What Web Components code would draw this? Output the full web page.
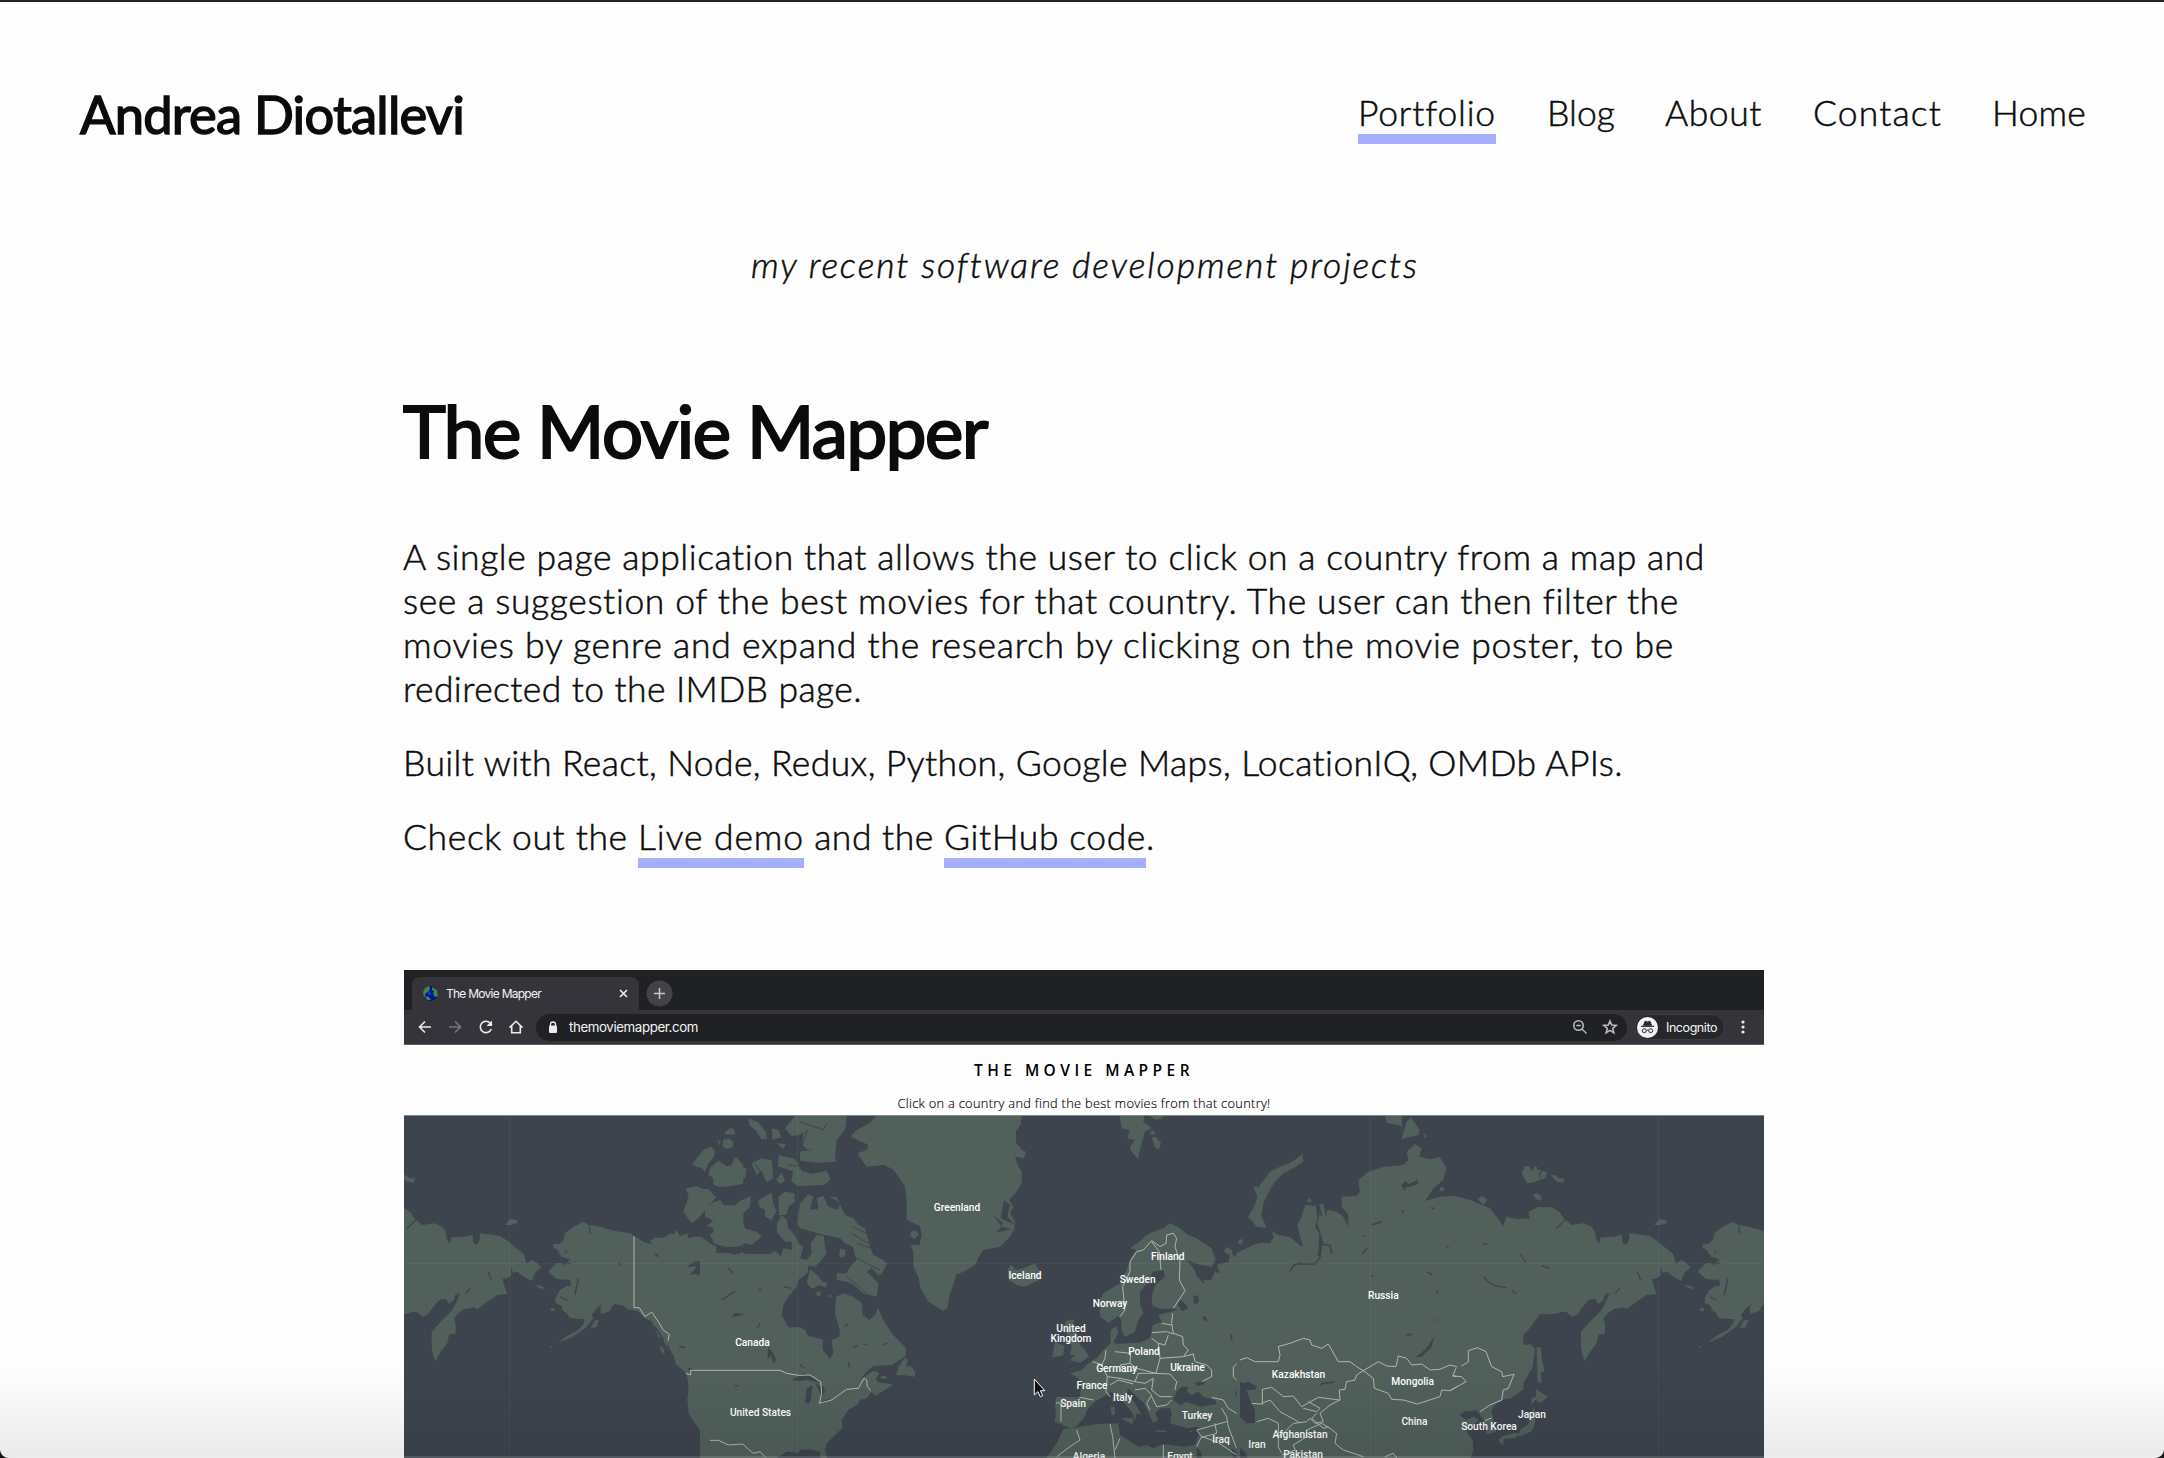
<!DOCTYPE html>
<html lang="en"><head><meta charset="utf-8"><title>Andrea Diotallevi</title>
<style>
html,body{margin:0;height:100%;overflow:hidden;background:#fefefe}
body{font-family:Lato,"Open Sans",sans-serif;color:#0b0b0b}
</style></head><body>
<portfolio-page></portfolio-page>
<script>
const define=(name,html,after)=>customElements.define(name,class extends HTMLElement{
  connectedCallback(){
    if(this.shadowRoot)return;
    const t=document.createElement('template');t.innerHTML=html;
    this.attachShadow({mode:'open'}).append(t.content.cloneNode(true));
    if(after)after(this);
  }});

/* Text run tracked so that it spans exactly its "w" attribute */
define('fit-text',`<style>:host{display:inline-block;white-space:pre;flex:none;font-variant-ligatures:none}</style><slot></slot>`,el=>{
  const n=el.textContent.length,w=+el.getAttribute('w');
  el.style.letterSpacing='0px';
  const now=el.getBoundingClientRect().width;
  el.style.letterSpacing=((w-now)/n)+'px';
  el.style.width=w+'px';
});

define('nav-link',`<style>
:host{display:block;height:44px;line-height:44px;font-size:35.500px;font-weight:300;-webkit-text-stroke:.5px #0b0b0b}
:host([active]){background:linear-gradient(#a5affb,#a5affb) 0 100%/100% 10px no-repeat;height:53px}
</style><slot></slot>`);

define('text-link',`<style>
:host{display:block;flex:none;height:53px;background:linear-gradient(#a5affb,#a5affb) 0 100%/100% 10px no-repeat}
</style><slot></slot>`);

define('site-header',`<style>
:host{display:flex;justify-content:space-between;align-items:flex-start;padding:78px 78px 0 80px;height:104px;box-sizing:content-box}
h1{margin:-2px 0 0;font-size:52.500px;line-height:72px;font-weight:400;-webkit-text-stroke:1.500px #0b0b0b}
nav{display:flex;padding-top:11px}
nav nav-link:nth-child(1){margin-right:51px}
nav nav-link:nth-child(2){margin-right:50px}
nav nav-link:nth-child(3){margin-right:51px}
nav nav-link:nth-child(4){margin-right:50px}
</style>
<h1><fit-text w="384">Andrea Diotallevi</fit-text></h1>
<nav><nav-link active><fit-text w="138">Portfolio</fit-text></nav-link><nav-link><fit-text w="68">Blog</fit-text></nav-link><nav-link><fit-text w="97">About</fit-text></nav-link><nav-link><fit-text w="129">Contact</fit-text></nav-link><nav-link><fit-text w="94">Home</fit-text></nav-link></nav>`);

define('project-text',`<style>
:host{display:block;font-size:35.500px;line-height:44px;font-weight:300;-webkit-text-stroke:.5px #0b0b0b}
h2{margin:0 0 61px;font-size:72.500px;line-height:88px;font-weight:400;-webkit-text-stroke:2.200px #0b0b0b}
p{margin:0 0 30px;display:flex;flex-direction:column;align-items:flex-start}
.row{flex-direction:row;height:44px;margin:0}
</style>
<h2><fit-text w="584">The Movie Mapper</fit-text></h2>
<p><fit-text w="1302">A single page application that allows the user to click on a country from a map and</fit-text><fit-text w="1276">see a suggestion of the best movies for that country. The user can then filter the</fit-text><fit-text w="1271">movies by genre and expand the research by clicking on the movie poster, to be</fit-text><fit-text w="459">redirected to the IMDB page.</fit-text></p>
<p><fit-text w="1220">Built with React, Node, Redux, Python, Google Maps, LocationIQ, OMDb APIs.</fit-text></p>
<p class="row"><fit-text w="235">Check out the </fit-text><text-link><fit-text w="166">Live demo</fit-text></text-link><fit-text w="140"> and the </fit-text><text-link><fit-text w="202">GitHub code</fit-text></text-link><fit-text w="9">.</fit-text></p>`);

define('browser-tabs',`<style>
:host{display:flex;height:40px;background:#202124;align-items:flex-start}
svg{display:block}
.tab{display:flex;align-items:center;box-sizing:border-box;width:227px;height:33px;margin:7px 0 0 8px;padding:0 10px 1px 10px;border-radius:8px 8px 0 0;background:#35343a;color:#f4f4f5;font:12px Inter,sans-serif}
.tab fit-text{margin:0 auto 0 7px}
.new{margin:10px 0 0 7px}
</style>
<div class="tab"><svg width="17" height="17" viewBox="0 0 17 17"><circle cx="8.500" cy="8.500" r="7.500" fill="#06158f"/><path d="M3 3l4-2 1 2-1 3-3 2-2 5-1-6zM10 2l5 3 1 6-3 1-2-3 1-3-2-1zM3 11l4 1 2 3-4 0z" fill="#3e8d3c"/><path d="M6 7l2-1 1 4-3 0z" fill="#1438d8"/></svg><fit-text w="95">The Movie Mapper</fit-text><svg width="11" height="11" viewBox="0 0 11 11" stroke="#f4f4f5" stroke-width="1.500"><path d="M2 2l7 7M9 2L2 9"/></svg></div>
<svg class="new" width="27" height="27" viewBox="0 0 27 27"><circle cx="13.500" cy="13.500" r="13" fill="#434247"/><path d="M13.500 8v11M8 13.500h11" stroke="#c8c8cb" stroke-width="1.500"/></svg>`);

define('browser-toolbar',`<style>
:host{display:flex;align-items:center;height:34px;box-sizing:content-box;background:#35343a;border-bottom:1px solid #5c5b61;color:#f4f4f5;font:13.300px Inter,sans-serif}
svg{display:block;flex:none;fill:none;stroke:#ececee;stroke-width:1.600}
.nav{display:flex;gap:14.500px;padding:0 0 0 12.500px;width:132px;box-sizing:border-box;flex:none}
.bar{display:flex;align-items:center;width:1091px;height:27px;border-radius:14px;background:#202124;box-sizing:border-box;padding:0 9px 0 12px;flex:none}
.bar fit-text{margin:0 auto 0 11px}
.bar svg:not(.lock){stroke:#b9babd}
.star{margin-left:14px}
.who{display:flex;align-items:center;width:90px;height:26px;box-sizing:border-box;border-radius:13px;margin-left:8px;background:#27262b;border:1px solid #3d3d43;gap:8px;padding-left:1px;font-size:12.500px}
.dots{margin-left:10px}
</style>
<div class="nav">
<svg width="16" height="16" viewBox="0 0 16 16"><path d="M14 8H2.500M8 2.500L2.500 8 8 13.500"/></svg>
<svg width="16" height="16" viewBox="0 0 16 16" style="stroke:#77767c"><path d="M2 8h11.500M8 2.500L13.500 8 8 13.500"/></svg>
<svg width="16" height="16" viewBox="0 0 16 16"><path d="M13.300 10A5.700 5.700 0 1 1 12.300 4.200L14 6"/><path d="M14 1.500V7H8.500z" fill="#ececee" stroke="none"/></svg>
<svg width="16" height="16" viewBox="0 0 16 16"><path d="M1.500 8.600L8 2.300l6.500 6.300M3.700 7v6.700h8.600V7"/></svg></div>
<div class="bar"><svg class="lock" width="10" height="13" viewBox="0 0 10 13"><path d="M2.500 5V3.500a2.500 2.500 0 0 1 5 0V5" stroke-width="1.300"/><rect x="1" y="4.500" width="8" height="7.500" rx="1" fill="#ececee" stroke="none"/></svg><fit-text w="129">themoviemapper.com</fit-text>
<svg width="16" height="16" viewBox="0 0 16 16"><circle cx="6.500" cy="6.500" r="4.700"/><path d="M10 10l4.500 4.500M4.300 6.500h4.400" stroke-width="1.400"/></svg>
<svg class="star" width="16" height="16" viewBox="0 0 16 16"><path d="M8 2l1.700 4.100 4.400.4-3.400 2.900 1.100 4.400L8 11.400l-3.800 2.400 1.100-4.400-3.400-2.900 4.400-.4z"/></svg></div>
<div class="who"><svg width="21" height="21" viewBox="0 0 21 21" style="stroke:#2b2b30;stroke-width:1"><circle cx="10.500" cy="10.500" r="10.500" fill="#f2f2f4" stroke="none"/><path d="M4 9.300h13" stroke-width="1.200"/><path d="M6.500 8.300l1.500-4 2.500.7 2.500-.7 1.500 4z" fill="#2b2b30"/><circle cx="7.300" cy="13.700" r="2"/><circle cx="13.700" cy="13.700" r="2"/><path d="M9.300 13.500q1.200-.8 2.400 0"/></svg><fit-text w="51">Incognito</fit-text></div>
<svg class="dots" width="16" height="16" viewBox="0 0 16 16"><g fill="#ececee" stroke="none"><circle cx="8" cy="3" r="1.600"/><circle cx="8" cy="8" r="1.600"/><circle cx="8" cy="13" r="1.600"/></g></svg>`);

define('map-title',`<style>
:host{display:flex;flex-direction:column;align-items:center;height:70px;background:#fefefe;color:#000;box-sizing:border-box;padding-top:15px}
b{font:600 15.500px/20px "Open Sans",sans-serif}
span{font:300 12.800px/16px "Open Sans",sans-serif;margin-top:15px;color:#000;-webkit-text-stroke:.15px #000}
</style><b><fit-text w="220">THE MOVIE MAPPER</fit-text></b><span><fit-text w="373">Click on a country and find the best movies from that country!</fit-text></span>`);

/* label anchor points: centre x, baseline y, name */
const labels=[[957,1210.500,'Greenland'],[752.500,1345.500,'Canada'],[760.500,1416,'United States'],[1025,1279,'Iceland'],[1167.700,1259.500,'Finland'],[1137.700,1283,'Sweden'],[1110,1307,'Norway'],[1071,1332,'United'],[1071,1342.300,'Kingdom'],[1144,1354.500,'Poland'],[1116.700,1372,'Germany'],[1187.500,1371,'Ukraine'],[1092,1388.700,'France'],[1122.700,1400.500,'Italy'],[1073,1407.300,'Spain'],[1197,1419,'Turkey'],[1221,1442.600,'Iraq'],[1257,1448.300,'Iran'],[1089,1460,'Algeria'],[1133,1465.500,'Libya'],[1180,1460,'Egypt'],[1298.500,1378.300,'Kazakhstan'],[1300,1437.500,'Afghanistan'],[1303,1458,'Pakistan'],[1383.300,1299.300,'Russia'],[1412.600,1385,'Mongolia'],[1414.500,1425.300,'China'],[1489,1430,'South Korea'],[1532,1418,'Japan']]
 .map(([x,y,s])=>`<text x="${x}" y="${y}">${s}</text>`).join('');

define('world-map',`<style>
:host{display:block;height:342px;background:#3d444d}
svg{display:block}
.l{fill:#51605b}.w{fill:#3d444d}
.b{fill:none;stroke:#aeb8b3;stroke-width:3;stroke-linejoin:round}
.k{fill:none;stroke:#3d444d;stroke-width:5}
text{font:500 10.200px Roboto,sans-serif;fill:#fff;text-anchor:middle}
</style>
<svg width="1360" height="342" viewBox="404 1116 1360 342"><defs>
<g id="alaska"><path class="l" d="M550,365L566,375 600,380 640,392 690,400 730,425 757,434 750,422 768,412 790,414 812,400 820,404 830,390 840,408 862,400 865,415 880,410 905,410 930,430 950,440 948,458 985,462 1000,468 1010,460 1030,465V1080H962L940,1045 930,1020 905,1000 885,970 866,940 862,900 866,860 860,822 850,812 828,792 822,770 800,745 790,720 775,710 765,685 755,665 735,655 712,632 685,628 670,618 645,612 635,620 632,632 612,640 604,643 600,625 606,612 590,625 575,645 580,655 560,680 540,695 515,712 475,728 500,708 535,690 550,672 555,658 510,655 500,640 487,630 485,618 465,608 468,590 480,570 500,558 512,558 510,540 470,537 445,515 465,492 480,488 495,495 510,478 485,470 470,448 460,445 460,433 478,432 490,420 495,400 520,380z"/>
<path class="l" d="M572,683L585,660 596,660 590,682zM450,625l12,-2 3,9 -10,2zM448,740l8,-3 -2,7zM407,556l18,2 9,8 -16,-2z"/>
<path class="k" d="M568,378l2,22M488,488l25,2M655,488l8,10M495,460l6,-8M535,535l-10,50M480,590l22,10" style="stroke-width:4"/></g>
<g id="siberia"><path class="l" d="M-70,290L-45,296 0,320 30,332 42,355 70,380 80,350 100,362 125,355 150,357 145,335 175,320 215,322 240,337 250,355 275,375 310,370 335,380 345,395 347,412 357,432 362,412 400,410 425,405 428,428 438,434 447,420 448,400 510,408 540,430 580,463 587,490 605,480 620,490 632,503 615,515 603,543 580,530 560,515 548,518 540,500 542,525 530,535 515,538 522,560 530,582 500,585 470,605 440,627 430,622 400,628 385,638 370,655 375,670 375,700 355,705 350,730 330,755 315,782 308,770 303,740 303,695 335,660 365,630 380,600 388,580 375,582 370,600 355,612 345,597 325,600 305,625 290,645 275,650 260,637 245,635 225,642 180,643 160,670 140,695 108,722 135,735 150,732 165,745 162,770 158,800 130,850 95,895 60,900 40,920 34,935 42,965 48,990 20,1002 10,960 -10,930 -30,935 -70,925z"/>
<path class="l" d="M523,375l15,-18 20,3 3,9 -20,6zM615,556l18,2 9,8 -16,-2zM125,220l10,-23 12,2 10,14 6,-14 8,2 2,10 16,0 12,8 -5,16 -20,5 -20,8 -15,2zM213,225l10,0 12,8 20,4 -8,11 -20,-4zM158,285l12,-6 14,10 0,13 -14,-4z"/>
<path class="k" d="M10,530q20,30 70,33M185,497l22,8M120,462l18,25M95,570l14,12M472,515l10,25M405,580l16,-18M228,386l28,-26M8,430l15,3" style="stroke-width:3.500"/><path class="k" d="M190,212q-18,5 -8,22" style="stroke-width:4"/></g></defs>
<rect x="404" y="1116" width="1360" height="342" class="w"/>
<g transform="translate(400 1100) scale(.333333)">
<use href="#siberia" x="-208"/><use href="#alaska"/>
<path class="l" d="M876,195L890,175 912,148 935,140 945,155 940,175 925,190 915,215 905,205zM925,225L930,205 955,182 975,195 985,215 1030,220V245L970,240 950,240zM975,95l20,-12 10,10 0,10 -30,0zM970,120l15,-5 15,10 -4,18 -20,3 -8,-12zM952,122l10,2 -3,12zM960,255l40,-15 30,-2V252L970,262zM858,265L890,258 910,268 925,266 948,293 925,315 900,350 875,370 850,335 866,290zM915,350L915,325 935,308 960,300 975,318 1000,315 1030,330V440H980L965,428 940,425 930,405 955,385 920,378 940,362zM1000,185l8,-15 22,25V225H1010z"/>
<path class="w" d="M858,500L885,485 910,482 905,495 925,502 905,512 895,528 885,522 870,525 890,500zM918,560l10,5 35,24 40,-16 -35,28 -25,12 -10,-4 15,-16z"/><path class="k" d="M765,460l10,10M985,505l14,16M992,650l28,-6M972,720l4,-15M838,740l16,3M865,805l14,8M750,662l12,30M765,680l25,40M800,735l22,40"/>
<path class="l" d="M778,735l12,10 5,20 -12,-12z"/>
</g>
<g transform="translate(720 1100) scale(.333333)">
<path class="l" d="M-60,465L0,458 30,460 55,472 62,455 80,462 150,462 165,452 182,468 190,445 215,450 215,425 195,425 170,395 172,370 185,345 200,360 205,385 225,405 235,430 250,440 240,475 260,480 275,460 272,430 290,405 312,408 315,440 320,460 305,480 285,500 265,497 262,520 235,540 230,560 205,590 190,615 185,645 205,682 240,682 255,690 265,708 308,718 308,750 330,778 340,760 335,720 358,710 360,690 353,670 345,640 348,590 370,580 400,590 425,610 428,645 448,660 465,645 475,625 490,660 515,700 540,725 558,745 557,768 530,785 515,795 460,798 440,815 420,838 440,825 460,812 478,818 468,838 475,848 500,850 520,855 495,870 465,888 455,875 440,895 418,900 415,912 385,930 365,960 368,985 350,1000 320,1030 315,1050 322,1080H302L300,1055 270,1048 240,1050 235,1058 200,1055 165,1078H-60z"/>
<path class="l" d="M395,105L410,90 450,68 470,46H905L902,75 888,95 890,130 905,150 918,155 910,180 890,190 905,215 905,250 890,275 868,300 880,320 870,340 885,365 883,388 870,410 840,440 790,450 775,475 765,495 730,515 708,525 700,555 690,580 683,622 670,633 625,605 602,565 595,530 580,500 580,455 572,435 598,435 605,405 600,378 560,360 560,300 555,260 535,230 520,208 490,195 440,200 425,180 412,160 440,150 445,135 395,112z"/>
<path class="w" d="M820,345l30,25 -10,8 35,10 -50,10 20,-18zM852,300l18,15 -8,35 24,25 -44,-20zM568,395l20,-8 10,15 -12,18 -18,-8zM888,90l15,10 -5,30 -10,0zM885,170l25,5 -4,18 -14,-2z"/><path class="l" d="M573,395l15,-4 8,12 -12,13 -14,-8z"/>
<path class="l" d="M862,512l10,-18 18,16 20,-5 35,-15 18,30 -5,20 -45,20 -22,-5 -25,-15zM528,825l8,-25 18,-26 10,2 -6,22 18,2 10,18 -2,12 -30,-4zM478,832l15,-5 10,5 -12,6z"/>
<path class="l" d="M195,85L225,48 380,48 375,90 350,120 345,170 348,185 290,188 240,182 240,155 262,150 248,135 250,95 240,105 215,108zM85,55l30,12 22,28 5,22 -18,0 -15,-25 -20,-15zM155,85l20,5 8,22 -25,8zM15,95l22,-12 8,20 -20,0zM10,122l28,0 2,15 -20,10 -12,-10zM170,130l28,2 -8,15zM95,190l30,-15 30,5 5,55 -20,12 -15,-35 -15,12zM175,165l50,12 20,35 30,10 45,-10 12,25 -18,18 -80,4 -20,-15 5,-30 -45,-15zM185,218l10,25 -15,8 -12,-12zM-20,195L10,200 35,195 45,170 60,205 80,205 75,235 40,230 30,245 0,262 -20,255zM115,300l40,-22 5,35 10,20 -15,28 -18,-10 -3,-22 -18,-10zM175,290l20,-15 28,5 2,25 -18,12 -8,28 -22,0zM-20,320L25,315 40,325 55,305 92,288 90,320 65,345 75,385 110,395 125,410 95,435 70,430 20,442 -20,430z"/>
<path class="l" d="M232,370L240,310 265,283 280,290 270,330 295,325 290,295 310,287 325,320 355,330 360,310 330,290 350,292 365,325 375,345 400,355 415,375 435,385 450,440 460,465 480,475 502,490 485,522 475,525 455,505 440,515 460,535 475,550 470,590 430,580 400,555 380,545 350,540 350,520 380,520 390,500 410,480 398,440 375,430 360,415 340,410 300,402 240,385zM260,550l10,-42 15,10 22,25 15,8 -5,12 -20,-8 -20,12zM357,460l5,-15 15,5 -3,20 -12,4zM290,575l12,0 0,12 -12,0zM322,588l12,-5 0,12zM282,415l15,0 10,20 -10,10z"/>
<path class="w" d="M215,840l35,-22 35,18 10,12 -35,-8 -25,4zM255,905l5,-40 18,-10 -5,45 -8,12zM285,850l25,10 5,12 -10,20 -8,-20zM305,905l30,-12 -25,18zM145,740l15,20 10,22 -10,8 -6,-22 -12,10zM112,568l15,-2 -5,8zM35,650l10,-12 32,6z"/>
<path class="k" d="M5,600l40,-26M120,670l-8,15M190,560l25,5M385,785l4,18M400,742l14,-6M430,730l10,6M488,735l16,-6M375,680l8,-10M45,858l12,-2M25,505l14,14M240,795l10,8" style="stroke-width:4"/>
<path class="k" d="M240,65l70,25 10,-20M262,90l-20,60 30,0M205,195l110,12M105,190l25,40M290,300v30M400,380l40,20M395,400l50,30M410,430l45,15M400,470l80,40M380,530l60,50M55,440l25,-5" style="stroke-width:3"/>
</g>
<g transform="translate(1020 1200) scale(.333333)">
<path class="l" d="M240,300L240,350 265,368 295,348 303,360 305,390 315,410 345,395 355,360 370,340 360,310 360,275 385,245 398,215 430,210 435,230 405,255 395,290 398,318 425,328 460,325 475,330 440,338 415,345 425,365 398,375 395,398 388,415 360,428 320,430 290,432 280,425 295,400 290,378 272,390 272,430 250,450 230,475 205,490 185,510 150,520 170,532 185,545 180,592 108,590 105,620 108,640 103,665 135,678 150,685 170,678 195,650 200,630 225,605 250,590 275,575 300,595 335,635 345,662 350,640 365,645 345,610 320,580 325,565 350,590 372,610 385,640 400,668 415,660 405,638 420,625 450,625 455,640 450,670 500,685 535,680 538,700 525,735 490,740 430,732 400,745 380,735 355,740 300,705 295,670 230,672 170,682 130,688 110,730 90,760 75,780H900V170L850,145 810,115 765,105 750,130 725,128 700,135 640,170 635,150 618,140 612,155 630,165 625,185 590,195 600,220 585,215 572,240 550,240 530,225 520,205 500,180 540,195 575,200 587,180 575,145 530,115 500,103 480,85 450,70 430,85 400,95 380,105 365,120 330,145 350,150 335,170 320,210 300,250 250,280z"/>
<path class="l" d="M143,492L150,480 180,488 207,470 195,450 180,435 170,400 155,385 163,358 138,362 130,390 148,410 155,440 150,465 165,465zM97,472l33,-6 3,-28 -28,-12zM700,-40L715,0 700,30 685,55 720,70 740,85 722,50 725,0 740,-40zM652,128l10,-12 8,6 -6,12zM303,655l38,-2 -4,20zM272,620l12,0 0,24 -10,2zM275,600l6,-10 0,20zM405,690l35,2 0,4 -32,-1zM505,695l14,-4 -4,6z"/>
<path class="w" d="M460,600L470,575 485,560 505,562 500,575 515,585 535,575 550,590 585,600 590,612 540,620 500,605 480,615zM645,580L660,550 685,545 710,555 705,570 680,575 690,600 700,620 705,640 705,660 690,672 665,660 660,640 665,620zM480,300l10,5 15,20 -20,8 -12,-20zM520,285l15,5 2,15 -14,8zM545,352l10,-4 8,12 -6,4zM525,550l28,-10 0,12 -20,6zM530,740l15,20 0,20 -15,0zM635,745l20,15 10,20h-25zM535,200l30,20 10,20 -40,-15z"/>
<path class="k" d="M632,402l4,18M728,350l2,12M815,240l5,14M810,215l20,-22M530,225l22,24"/>
<path class="b" d="M300,350L315,330 308,260 330,215 330,185 350,155 370,150 395,122 420,140 438,130 440,105 460,100 470,115 465,140 480,185 478,240 495,272 460,325M395,125L418,155 423,210M458,340L455,370 460,400 488,410 490,435 505,450 490,470 520,462 525,485 560,495 575,510 575,530 545,545M425,370l30,5M395,398L440,395 460,402M395,415L415,430 435,435 445,405M415,430L420,475 490,470M420,475L408,520 350,505 330,490 332,460 285,455M330,490L300,495 320,515 350,510M258,450L255,475 245,495 262,530 258,575 270,590M218,485l30,10M262,530L300,535 345,545 355,520 400,520 450,522 470,545 465,570M345,545L375,550 400,535M400,535L395,570 420,590 455,590M345,570L375,565 395,585 380,610 390,630M395,590L410,620 440,615 455,600M270,555l25,-15 45,12M108,608l15,2 0,55M178,592l42,8M575,592L610,600 625,625 650,640 660,650M605,625L620,650 625,680 640,720 650,745M530,740L545,710 530,690 620,665M545,710L590,725 650,765M585,670L590,700 545,712M170,690L180,720 150,740 110,770M270,672L278,710 285,774M300,715L285,750M430,735V774M660,550L640,530 640,500 675,472 730,485 780,480M727,615V568L755,565 790,590M690,612L727,610 750,610"/>
</g>
<g transform="translate(1240 1100) scale(.333333)">
<path class="l" d="M-10,460L45,432 50,445 75,440 110,435 95,393 115,405 150,412 190,443 180,408 172,375 185,350 195,315 228,318 232,360 225,380 238,400 235,460 225,490 240,480 245,432 250,430 240,395 232,370 240,335 235,312 250,312 258,350 262,330 290,335 310,350 325,380 325,345 305,320 305,290 350,288 360,275 355,240 385,215 430,200 490,195 505,180 500,155 525,132 545,145 538,170 570,178 600,172 620,205 610,240 580,265 555,303 600,290 640,287 690,300 750,325 770,350 790,378 800,350 850,362V868L820,890 780,900 750,920 740,935 755,965 768,995 745,1002 733,960 715,930 690,925 658,945 678,960 700,950 718,960 690,980 680,995 698,1020 700,1050 690,1080H-10z"/>
<path class="l" d="M188,162L190,185 165,202 130,220 105,245 95,260 72,305 63,345 80,383 50,380 25,350 45,315 55,275 60,255 90,215 120,200 150,190zM435,46L440,68 475,75 485,80 487,46zM484,118L500,65 512,52 540,90 535,105zM550,100l12,12 -8,2zM712,298l15,-10 15,12 -12,14zM600,262l12,0 0,10 -12,2zM202,300l6,-5 8,8 -12,5z"/>
<path class="w" d="M0,845L10,850 25,845 50,860 45,870 20,870 30,900 45,930 45,968 20,970 0,950zM527,772L560,745 583,708 575,740 545,770zM484,256l12,-12 10,8 26,-12 4,10 -20,8 -18,4 -5,12 -5,-12zM235,860l10,-12 42,-4 -10,6 -30,3zM0,1045l15,10 10,25h-25z"/>
<path class="k" d="M150,515l12,-20 20,-6M180,492l45,0 15,-20 5,-40 25,5 5,25M235,310l10,40M710,458l5,32M735,532q20,30 65,30M395,375l30,-10M368,460l14,-15M500,706l14,-4M590,570l5,12M562,516l14,8M660,630l3,4M370,405l2,6M395,525l5,6M656,590l4,-20M620,440l6,2M580,660l6,0M485,335l8,-2M575,322l8,6" style="stroke-width:4.500"/>
<path class="b" d="M0,780L20,773 45,785 115,785 120,765 115,740 150,730 190,715 210,720 215,735 245,745 265,732 295,785 330,785 350,800 370,812 415,785 440,798 468,800 475,768 500,775 515,795 545,792 570,810 600,808 630,795 665,803 685,785 685,752 712,743 740,752 755,800 785,815 790,830 822,823 805,865 790,870 785,900 750,915 720,935M370,812L400,835 403,865 445,880 455,898 490,900 532,912 600,890 605,870 630,872 678,845 665,830 638,828 650,800M370,812L350,825 345,840 320,845 315,868 298,870 300,900 270,915 240,940 250,965 225,970 210,955 200,965 180,968M67,915V868L95,862 130,890 160,888 185,920M35,910L60,912 90,900 120,935 180,968 160,970 130,1000 115,1010M185,920L235,892 298,900M190,925L230,935 240,925 205,905M50,965L85,955 115,970 115,1040 125,1060M125,1065L165,1050 160,1035 200,1010 200,990 245,970 270,985 290,1000 285,1030 310,1050 370,1070M230,940L215,955 250,985 265,980M435,1070L460,1060 470,1074M735,962l20,-8"/>
</g>
<g transform="translate(1480 1100) scale(.333333)"><use href="#siberia"/><use href="#alaska" x="208"/>
<path class="l" d="M170,742L182,742 186,780 194,812 182,820 185,850 173,845zM168,866L190,882 205,890 180,908 165,900 153,915 155,895 168,890zM160,920l8,20 -5,40 -10,15 -30,12 -10,0 10,-20 20,-12 10,-25zM60,1010l45,-12 15,5 -15,10 -35,4zM56,1015l16,0 -2,22 -12,-10z"/>
<path class="b" d="M-55,798L-35,785 -35,752 -8,743 18,755 35,800 65,815 68,830 102,823 85,865 70,870 65,900 30,915 0,935M-82,828L-55,830 -42,845 -90,872M15,962l20,-8"/></g>
<g transform="translate(880 1050) scale(.333333)"><path class="l" d="M718,195L725,235 750,240 742,265 765,270 750,290 755,305 773,327 780,300 795,245 815,235 790,215 793,195zM810,245l12,-4 4,12 -14,2zM815,262l12,-2 16,18 -6,20 -12,-6zM805,195l20,14 15,-2 18,-12z"/></g>
<g transform="translate(400 1100) scale(.333333)"><path class="b" d="M702,410V623L718,623 735,650 755,636 775,665 790,690 808,703 804,722M857,820l15,5V811H1140L1160,820 1195,826 1230,825 1262,845 1265,880 1258,910 1295,900 1340,868 1375,865 1392,835 1400,840 1402,860 1412,872M930,1021H955L985,1035 1028,1032 1042,1045 1060,1060 1080,1055 1097,1072"/></g>
<g stroke="#fff" stroke-opacity=".04"><path d="M509.500 1116v342M797.500 1116v342M1370.500 1116v342M1658.500 1116v342M404 1263.500h1360"/></g>
<g>${labels}</g>
<path d="M1034.300 1379v16l3.600-3.400 2.400 5.200 2.400-1.100-2.300-5h4.400z" fill="#111" stroke="#fff" stroke-width="1"/>
</svg>`);

define('demo-shot',`<style>:host{display:block;width:1360px}world-map{border-top:1px solid #7f8a86}</style>
<browser-tabs></browser-tabs><browser-toolbar></browser-toolbar><map-title></map-title><world-map></world-map>`);

define('portfolio-page',`<style>
:host{display:block;position:relative;height:1458px;overflow:hidden;box-sizing:border-box;border-top:2px solid #242225}
.tag{display:flex;justify-content:center;font-size:35.500px;line-height:44px;font-weight:300;font-style:italic;-webkit-text-stroke:.5px #0b0b0b;padding:59px 0 0 6px}
main{display:block;width:1360px;margin:0 0 0 404px}
project-text{margin-left:-1px;padding-top:99px}
demo-shot{margin-top:111px}
.shade{position:absolute;inset:auto 0 0 0;height:100px;background:linear-gradient(#0000,#00000005 35%,#00000014);pointer-events:none}
.edge{position:absolute;inset:auto 0 0 0;height:2px;background:#ffffff22}
.corner{position:absolute;bottom:0;width:9px;height:9px}
.lc{left:0;background:radial-gradient(circle at 100% 0,#0000 8.500px,#161616 9.500px)}
.rc{right:0;background:radial-gradient(circle at 0 0,#0000 8.500px,#161616 9.500px)}
</style>
<site-header></site-header>
<div class="tag"><fit-text w="668">my recent software development projects</fit-text></div>
<main><project-text></project-text><demo-shot></demo-shot></main>
<div class="shade"></div><div class="edge"></div><div class="corner lc"></div><div class="corner rc"></div>`);
</script></body></html>
